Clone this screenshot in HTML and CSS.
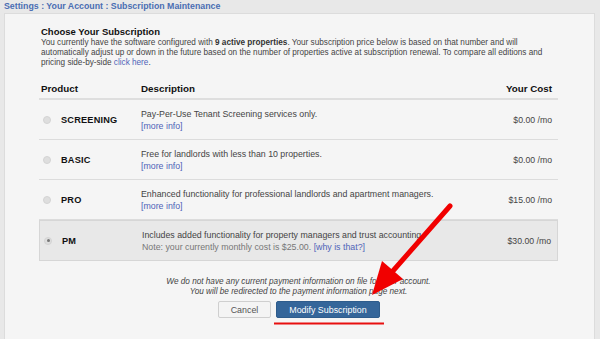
FILE: index.html
```html
<!DOCTYPE html>
<html>
<head>
<meta charset="utf-8">
<link rel="stylesheet" href="styles.css">
</head>
<body>
<div class="crumb">Settings : Your Account : Subscription Maintenance</div>
<div class="panel">
  <h1 class="heading">Choose Your Subscription</h1>
  <p class="intro">You currently have the software configured with <b>9 active properties</b>. Your subscription price below is based on that number and will automatically adjust up or down in the future based on the number of properties active at subscription renewal. To compare all editions and pricing side-by-side <a href="#">click here</a>.</p>

  <div class="table">
    <div class="row head">
      <div class="c-prod">Product</div>
      <div class="c-desc">Description</div>
      <div class="c-cost">Your Cost</div>
    </div>
    <div class="row">
      <div class="c-prod"><span class="radio"></span><span class="name">SCREENING</span></div>
      <div class="c-desc">Pay-Per-Use Tenant Screening services only.<br><a href="#">[more info]</a></div>
      <div class="c-cost">$0.00 /mo</div>
    </div>
    <div class="row">
      <div class="c-prod"><span class="radio"></span><span class="name">BASIC</span></div>
      <div class="c-desc">Free for landlords with less than 10 properties.<br><a href="#">[more info]</a></div>
      <div class="c-cost">$0.00 /mo</div>
    </div>
    <div class="row">
      <div class="c-prod"><span class="radio"></span><span class="name">PRO</span></div>
      <div class="c-desc">Enhanced functionality for professional landlords and apartment managers.<br><a href="#">[more info]</a></div>
      <div class="c-cost">$15.00 /mo</div>
    </div>
    <div class="row selected">
      <div class="c-prod"><span class="radio on"></span><span class="name">PM</span></div>
      <div class="c-desc">Includes added functionality for property managers and trust accounting.<br><span class="note">Note: your currently monthly cost is $25.00. <a href="#">[why is that?]</a></span></div>
      <div class="c-cost">$30.00 /mo</div>
    </div>
  </div>

  <p class="payinfo">We do not have any current payment information on file for your account.<br>You will be redirected to the payment information page next.</p>
  <div class="actions">
    <button class="btn cancel">Cancel</button>
    <button class="btn primary">Modify Subscription</button>
  </div>
</div>

<svg class="annot" width="600" height="339" viewBox="0 0 600 339">
  <line x1="450" y1="206" x2="392" y2="272" stroke="#f10000" stroke-width="5" stroke-linecap="round"/>
  <polygon points="372,295 382,261 403,279" fill="#f10000"/>
  <line x1="274" y1="323.5" x2="384" y2="323.5" stroke="#e81010" stroke-width="2"/>
</svg>
</body>
</html>
```
FILE: styles.css
```css
* { box-sizing: border-box; }
html, body { margin: 0; padding: 0; }
body {
  background: #e8e8e8;
  font-family: "Liberation Sans", Arial, sans-serif;
  color: #333;
  width: 600px;
  height: 339px;
  overflow: hidden;
  position: relative;
}
a { color: #4f63b8; text-decoration: none; }
.crumb {
  font-size: 8.8px;
  font-weight: bold;
  color: #4a6eb3;
  padding: 1px 0 0 4px;
  height: 13px;
  line-height: 11px;
}
.panel {
  margin: 0 5px 0 4px;
  background: #f5f5f5;
  border: 1px solid #dcdcdc;
  padding: 11px 36px 30px 34px;
  height: 340px;
}
.heading {
  margin: 0 0 0 2px;
  font-size: 9.5px;
  line-height: 13px;
  font-weight: bold;
  color: #111;
}
.intro {
  margin: 0 0 0 2px;
  font-size: 8.2px;
  line-height: 10px;
  color: #444;
}
.intro b { color: #333; }
.table { margin-top: 11px; }
.row {
  display: grid;
  grid-template-columns: 102px 1fr 110px;
  align-items: center;
  height: 40px;
  border-bottom: 1px solid #dcdcdc;
  font-size: 8.8px;
  color: #444;
}
.row.head {
  height: 21px;
  border-bottom: 2px solid #dedede;
  font-weight: bold;
  font-size: 9.8px;
  color: #111;
}
.row.head .c-prod { padding-left: 2px; }
.c-desc { line-height: 12px; padding-top: 1px; }
.c-cost { text-align: right; padding-right: 6px; font-size: 8.7px; }
.row.head .c-cost { font-size: 9.8px; }
.c-prod { display: flex; align-items: center; padding-left: 4px; }
.radio {
  width: 8px; height: 8px;
  border-radius: 50%;
  background: #dedede;
  border: 1px solid #d4d4d4;
  margin-right: 10px;
  position: relative;
}
.radio.on::after {
  content: "";
  position: absolute;
  left: 1.5px; top: 1.5px;
  width: 3px; height: 3px;
  border-radius: 50%;
  background: #777;
}
.name { font-weight: bold; font-size: 9.2px; color: #111; letter-spacing: 0.2px; }
.row.selected {
  background: #e8e8e8;
  border: 1px solid #d6d6d6;
  height: 41px;
}
.note { color: #777; }
.payinfo {
  margin: 16px 0 0 0;
  text-align: center;
  font-style: italic;
  font-size: 8.2px;
  line-height: 10px;
  color: #444;
}
.actions {
  display: flex;
  justify-content: center;
  gap: 5px;
  margin-top: 4px;
  padding-left: 1px;
}
.btn {
  font-family: "Liberation Sans", Arial, sans-serif;
  font-size: 8.9px;
  height: 17px;
  padding: 0;
  border-radius: 2px;
  cursor: pointer;
}
.cancel {
  width: 53px;
  background: #f4f4f4;
  color: #555;
  border: 1px solid #cfcfcf;
}
.primary {
  width: 104px;
  background: #35669a;
  color: #fff;
  border: 1px solid #2e5c8c;
}
.annot { position: absolute; left: 0; top: 0; pointer-events: none; }
```
